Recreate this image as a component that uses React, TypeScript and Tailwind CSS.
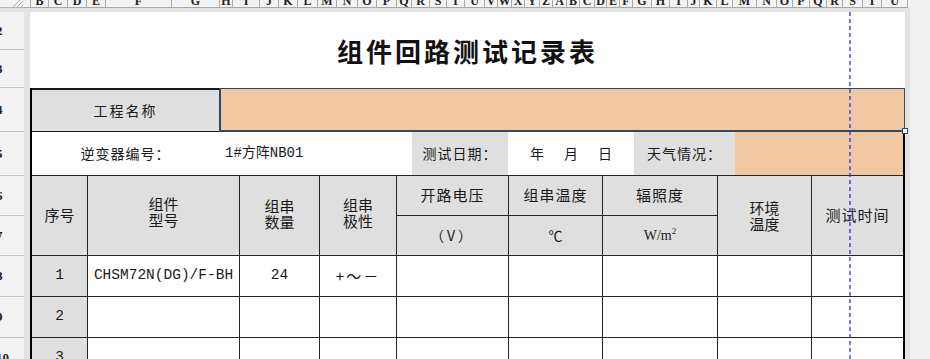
import React from 'react';

const cjk = "font-['Noto_Sans_CJK_SC',sans-serif]";
const mono = "font-['Liberation_Mono','Noto_Sans_CJK_SC',monospace]";

// column header edges (px, page coords)
const colEdges = [24, 31, 49, 68, 87, 106, 172, 220, 233, 260, 279, 298, 318, 337, 358, 377, 397, 412, 430, 447, 465, 485, 498, 512, 525, 540, 553, 567, 580, 595, 607, 620, 633, 652, 670, 688, 700, 717, 733, 757, 777, 793, 810, 827, 843, 863, 882, 908];
const rowHeights = [38, 38, 44, 44, 40, 40, 41, 41, 41, 41];

const colLetter = (i: number) => String.fromCharCode(65 + (i % 26));

const Cell: React.FC<{ gray?: boolean; last?: boolean; span?: boolean; className?: string; children?: React.ReactNode }> = ({ gray, last, span, className = '', children }) => (
    <div
        className={`${gray ? 'bg-[#dfdfdf]' : 'bg-white'} ${last ? '' : 'border-r'} ${span ? 'row-span-2' : ''} border-b border-[#262626] flex items-center justify-center text-center overflow-hidden ${className}`}
    >
        {children}
    </div>
);

const DataRow: React.FC<{ n: number; model?: string; count?: string; polarity?: string }> = ({ n, model, count, polarity }) => (
    <>
        <Cell gray className={`${mono} text-[14.5px]`}>{n}</Cell>
        <Cell className={`${mono} text-[14.5px]`}>{model}</Cell>
        <Cell className={`${mono} text-[14.5px]`}>{count}</Cell>
        <Cell className={`${cjk} text-[15px] tracking-[2px]`}>{polarity}</Cell>
        <Cell />
        <Cell />
        <Cell />
        <Cell />
        <Cell last />
    </>
);

export default function App() {
    return (
        <div className="w-[930px] h-[359px] overflow-hidden bg-[#f0f0f0] flex flex-col text-[#1a1a1a]">
            {/* column headers */}
            <div className="flex h-[8px] shrink-0">
                <div className="w-[24px] bg-[#f3f3f3] border-b border-[#b5b5b5] relative">
                    <svg className="absolute right-[1px] top-0" width="14" height="8" viewBox="0 0 14 8">
                        <path d="M3 8 L11 0 M7 8 L14 1 M11 8 L14 5" stroke="#b0b0b0" strokeWidth="1" />
                    </svg>
                </div>
                {colEdges.slice(0, -1).map((x, i) => (
                    <div
                        key={i}
                        style={{ width: colEdges[i + 1] - x }}
                        className="h-[8px] bg-[#f3f3f3] border-r border-b border-[#a9a9a9] flex justify-center overflow-hidden"
                    >
                        {i > 0 && (
                            <span className="font-['Liberation_Serif',serif] font-bold text-[12px] leading-[14px] -mt-[6px] text-[#222]">
                                {colLetter(i)}
                            </span>
                        )}
                    </div>
                ))}
            </div>
            <div className="h-[4px] shrink-0 w-[910px] bg-[#e4e4e4]" />

            <div className="flex flex-1 min-h-0">
                {/* row headers */}
                <div className="w-[24px] flex flex-col shrink-0">
                    {rowHeights.map((h, i) => (
                        <div
                            key={i}
                            style={{ height: h }}
                            className="shrink-0 bg-[#f3f3f3] border-b border-[#c4c4c4] flex items-center overflow-hidden"
                        >
                            <span className="font-['Liberation_Serif',serif] font-bold text-[13px] -ml-[4px] text-[#222]">{i + 2}</span>
                        </div>
                    ))}
                </div>
                <div className="w-[6px] shrink-0 bg-[#e4e4e4]" />

                {/* sheet */}
                <div className={`w-[875px] shrink-0 bg-white relative ${cjk}`}>
                    <div className="h-[76px] flex items-center justify-center">
                        <h1 className="text-[26px] font-bold tracking-[3px] text-[#111]">组件回路测试记录表</h1>
                    </div>

                    <div className="border-l-2 border-black">
                        <div className="flex h-[44px]">
                            <div className="w-[187px] bg-[#dfdfdf] border-t-2 border-b border-[#1a1a1a] flex items-center justify-center text-[14px] tracking-[2px]">
                                工程名称
                            </div>
                            <div className="flex-1 bg-[#f0c8a4] border-t border-l-2 border-b-2 border-r border-[#2f4a66] relative">
                                <div className="absolute -right-[4px] -bottom-[4px] w-[6px] h-[6px] bg-white border border-[#2f4a66]" />
                            </div>
                        </div>

                        <div className="flex h-[44px] border-r-2 border-r-black border-b border-b-[#262626] text-[14px]">
                            <div className="w-[187px] flex items-center justify-center tracking-[1px]">逆变器编号：</div>
                            <div className={`w-[193px] flex items-center pl-[6px] ${mono} text-[14px]`}>1#方阵NB01</div>
                            <div className="w-[96px] bg-[#dfdfdf] flex items-center justify-center tracking-[1px]">测试日期：</div>
                            <div className="w-[126px] flex items-center justify-center gap-[20px]">
                                <span>年</span>
                                <span>月</span>
                                <span>日</span>
                            </div>
                            <div className="w-[101px] bg-[#dfdfdf] flex items-center justify-center tracking-[1px]">天气情况：</div>
                            <div className="flex-1 bg-[#f0c8a4]" />
                        </div>

                        <div className="grid grid-cols-[56px_152px_80px_77px_112px_94px_115px_94px_91px] grid-rows-[40px_40px_41px_41px_41px] border-r-2 border-black text-[15px]">
                            <Cell gray span>序号</Cell>
                            <Cell gray span>
                                <div className="leading-[16px] pb-[8px]">组件<br />型号</div>
                            </Cell>
                            <Cell gray span>
                                <div className="leading-[16px] pb-[4px]">组串<br />数量</div>
                            </Cell>
                            <Cell gray span>
                                <div className="leading-[16px] pb-[6px]">组串<br />极性</div>
                            </Cell>
                            <Cell gray className="tracking-[1px]">开路电压</Cell>
                            <Cell gray className="tracking-[1px]">组串温度</Cell>
                            <Cell gray className="tracking-[1px]">辐照度</Cell>
                            <Cell gray span>
                                <div className="leading-[16px]">环境<br />温度</div>
                            </Cell>
                            <Cell gray span last className="tracking-[1px]">测试时间</Cell>
                            <Cell gray className="text-[14px] tracking-[3px]">（V）</Cell>
                            <Cell gray className="text-[14px]">℃</Cell>
                            <Cell gray className="font-['Liberation_Serif',serif] text-[14px]">
                                W/m<sup className="text-[9px] -top-[5px]">2</sup>
                            </Cell>
                            <DataRow n={1} model="CHSM72N(DG)/F-BH" count="24" polarity="+～－" />
                            <DataRow n={2} />
                            <DataRow n={3} />
                        </div>
                    </div>

                    {/* page break line */}
                    <svg className="absolute left-[819px] top-0" width="2" height="359">
                        <line x1="1" y1="0" x2="1" y2="359" stroke="#1f1ff0" strokeWidth="1.2" strokeDasharray="4 3" />
                    </svg>
                </div>
                <div className="w-[5px] shrink-0 bg-[#e2e2e2]" />
            </div>
        </div>
    );
}
